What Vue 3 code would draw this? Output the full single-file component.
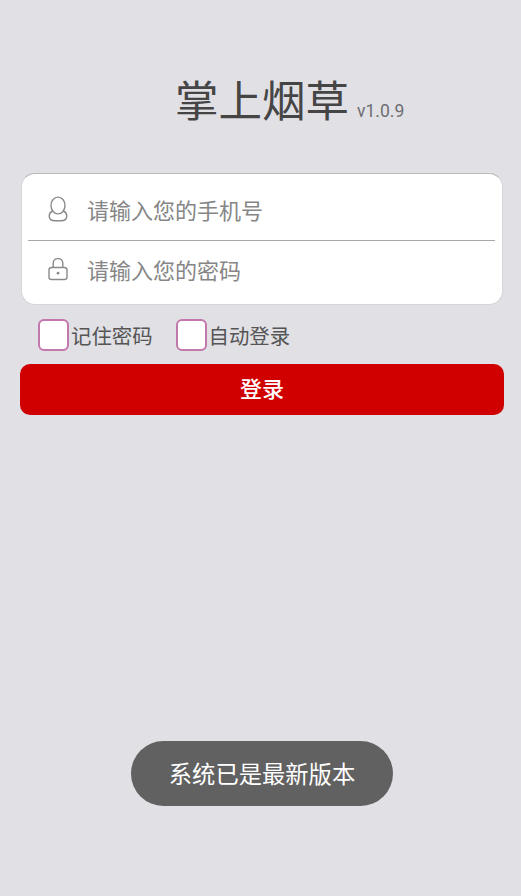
<template>
  <div class="page">
    <div class="header">
      <span class="title">掌上烟草</span>
      <span class="version">v1.0.9</span>
    </div>

    <div class="login-card">
      <div class="input-row first">
        <svg class="icon" width="22" height="26" viewBox="0 0 22 26" fill="none" stroke="#8a8a8a" stroke-width="1.4">
          <ellipse cx="11" cy="9.5" rx="7" ry="8.4" />
          <path d="M5.6 15C3.2 16.2 2.2 18 2.2 20C2.2 23 4.6 24.8 8 24.8H14C17.4 24.8 19.8 23 19.8 20C19.8 18 18.8 16.2 16.4 15" />
        </svg>
        <span class="placeholder">请输入您的手机号</span>
      </div>
      <div class="divider"></div>
      <div class="input-row second">
        <svg class="icon" width="22" height="24" viewBox="0 0 22 24" fill="none" stroke="#8a8a8a" stroke-width="1.4">
          <path d="M6.2 10.5V6.5C6.2 3.6 8.2 1.6 11 1.6C13.8 1.6 15.8 3.6 15.8 6.5V10.5" />
          <rect x="2" y="10.5" width="18" height="12" rx="2.6" />
          <circle cx="11" cy="16.2" r="1.4" fill="#8a8a8a" stroke="none" />
        </svg>
        <span class="placeholder">请输入您的密码</span>
      </div>
    </div>

    <div class="options">
      <label class="option" v-for="item in options" :key="item">
        <span class="checkbox"></span>
        <span class="option-text">{{ item }}</span>
      </label>
    </div>

    <button class="login-btn">登录</button>

    <div class="toast">系统已是最新版本</div>
  </div>
</template>

<script setup>
const options = ['记住密码', '自动登录']
</script>

<style>
html, body {
  margin: 0;
  background: #e0e0e5;
}
</style>

<style scoped>
.page {
  position: relative;
  height: 896px;
  overflow: hidden;
  box-sizing: border-box;
  padding: 70px 17px 0 20px;
  background: #e0e0e5;
  font-family: "Liberation Sans", "Noto Sans CJK SC", sans-serif;
}

.header {
  display: flex;
  align-items: baseline;
  height: 64px;
  padding-left: 155px;
}

.title {
  font-size: 43.5px;
  line-height: 64px;
  color: #454545;
}

.version {
  margin-left: 8px;
  font-family: "Roboto", sans-serif;
  font-size: 17.5px;
  color: #6e6e72;
}

.login-card {
  margin: 39px 1px 0 1px;
  height: 132px;
  box-sizing: border-box;
  padding: 0 7px 0 6px;
  background: #fff;
  border: 1px solid #d6d6da;
  border-top-color: #b9b9bd;
  border-radius: 14px;
}

.input-row {
  display: flex;
  align-items: center;
  box-sizing: border-box;
}

.input-row.first {
  height: 66px;
  padding-top: 3px;
}

.input-row.second {
  height: 63px;
  padding-bottom: 7px;
}

.icon {
  flex: none;
  margin-left: 19px;
}

.placeholder {
  margin-left: 18px;
  font-size: 22px;
  color: #868686;
}

.divider {
  height: 1px;
  background: #a8a8a8;
}

.options {
  display: flex;
  gap: 23px;
  margin-top: 14px;
  padding-left: 18px;
}

.option {
  display: flex;
  align-items: center;
  height: 32px;
}

.checkbox {
  width: 31px;
  height: 32px;
  box-sizing: border-box;
  margin-right: 2px;
  background: #fff;
  border: 2px solid #c278ac;
  border-radius: 6px;
}

.option-text {
  font-size: 20.4px;
  color: #555;
}

.login-btn {
  display: block;
  width: 484px;
  height: 51px;
  margin-top: 13px;
  padding: 0 0 6px;
  border: none;
  border-radius: 10px;
  background: #d10000;
  color: #fff;
  font-family: inherit;
  font-size: 22px;
  font-weight: 500;
}

.toast {
  position: absolute;
  left: 131px;
  top: 741px;
  width: 262px;
  height: 65px;
  border-radius: 33px;
  background: #616161;
  color: #fff;
  font-size: 23.3px;
  line-height: 68px;
  text-align: center;
}
</style>
